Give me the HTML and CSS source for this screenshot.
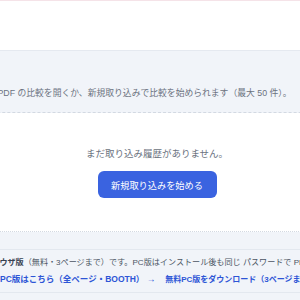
FILE: index.html
```html
<!DOCTYPE html>
<html lang="ja">
<head>
<meta charset="utf-8">
<link rel="stylesheet" href="styles.css">
</head>
<body>
<div class="page">
  <div class="top"></div>
  <div class="band">
    <p class="hint">取り込んだ PDF の比較を開くか、新規取り込みで比較を始められます（最大 50 件）。</p>
  </div>
  <div class="empty">
    <p class="empty-text">まだ取り込み履歴がありません。</p>
    <button class="btn">新規取り込みを始める</button>
  </div>
  <div class="foot">
    <div class="note">
      <p class="note-line">この<b>ブラウザ版</b>（無料・3ページまで）です。PC版はインストール後も同じ パスワードで PDF を比較できます。</p>
      <p class="note-links"><a class="lnk lnk-main">PC版はこちら（全ページ・BOOTH） →</a><a class="lnk">無料PC版をダウンロード（3ページまで）</a></p>
    </div>
  </div>
</div>
</body>
</html>
```
FILE: styles.css
```css
html, body {
  margin: 0;
  padding: 0;
  background: #ffffff;
  overflow: hidden;
  width: 300px;
  height: 300px;
}
body {
  font-family: "Liberation Sans", "Noto Sans CJK JP", sans-serif;
  color: #6b7280;
}
.page {
  width: 440px;
  margin-left: -63px;
}
.top {
  height: 49px;
  border-top: 1px solid #f5e3e8;
  background: #ffffff;
}
.band {
  background: #f1f4f9;
  border-top: 1px solid #e5e9f0;
  border-bottom: 1px dashed #d3d9e2;
  height: 61px;
  padding: 0 14px;
  box-sizing: content-box;
}
.hint {
  margin: 0;
  padding-top: 36px;
  font-size: 8.8px;
  line-height: 13px;
  white-space: nowrap;
  color: #6b7280;
}
.empty {
  background: #ffffff;
  border-bottom: 1px dotted #d3d9e2;
  display: flex;
  flex-direction: column;
  align-items: center;
  padding: 34px 0 33px;
}
.empty-text {
  margin: 0 0 10px;
  font-size: 9.5px;
  line-height: 14px;
  color: #6b7280;
}
.btn {
  width: 119px;
  height: 27px;
  border: none;
  border-radius: 6px;
  background: #3a63e0;
  color: #ffffff;
  font-family: inherit;
  font-size: 9.2px;
  padding: 0;
}
.foot {
  background: #f1f4f9;
  padding: 17px 16px 20px;
}
.note {
  border-top: 1px solid #e3e8ef;
  border-bottom: 1px solid #e3e8ef;
  padding: 4px 0 4px 14px;
}
.note-line {
  margin: 0;
  font-size: 8.1px;
  line-height: 17px;
  white-space: nowrap;
  color: #4b5563;
}
.note-line b {
  color: #374151;
}
.note-links {
  margin: 0 0 0 33px;
  font-size: 8px;
  line-height: 17px;
  white-space: nowrap;
  display: flex;
  gap: 10px;
}
.lnk {
  color: #2d55d6;
  font-weight: bold;
}
.lnk-main {
  font-size: 8.5px;
}
```
